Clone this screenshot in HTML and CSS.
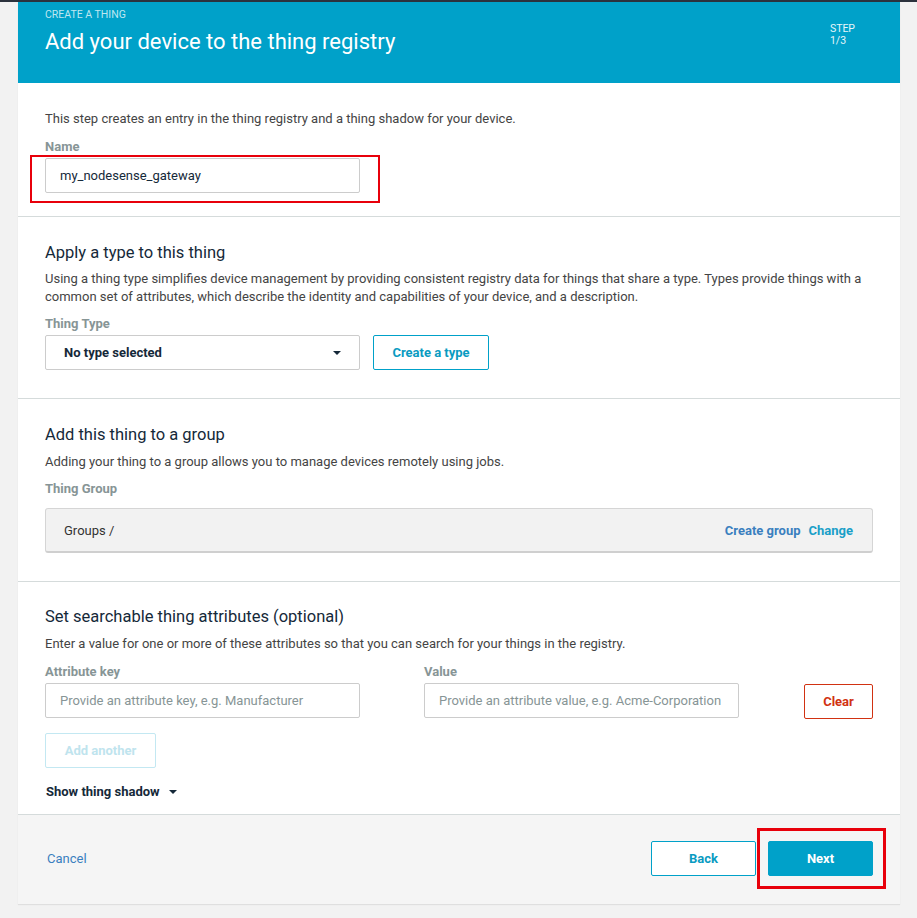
FILE: index.html
```html
<!DOCTYPE html>
<html>
<head>
<meta charset="utf-8">
<link rel="stylesheet" href="styles.css">
</head>
<body>
<div class="topline"></div>
<div class="page">
  <div class="card">
    <header class="hero">
      <div class="hero-text">
        <div class="eyebrow">CREATE A THING</div>
        <h1 class="title">Add your device to the thing registry</h1>
      </div>
      <div class="step">STEP<br>1/3</div>
    </header>

    <section class="sec sec-name">
      <p class="desc">This step creates an entry in the thing registry and a thing shadow for your device.</p>
      <label class="label">Name</label>
      <div class="highlight-wrap">
        <div class="input filled">my_nodesense_gateway</div>
      </div>
    </section>

    <section class="sec sec-type">
      <h2 class="heading">Apply a type to this thing</h2>
      <p class="desc">Using a thing type simplifies device management by providing consistent registry data for things that share a type. Types provide things with a common set of attributes, which describe the identity and capabilities of your device, and a description.</p>
      <label class="label">Thing Type</label>
      <div class="row">
        <div class="input select"><span>No type selected</span><span class="caret"></span></div>
        <button class="btn btn-outline btn-type">Create a type</button>
      </div>
    </section>

    <section class="sec sec-group">
      <h2 class="heading">Add this thing to a group</h2>
      <p class="desc">Adding your thing to a group allows you to manage devices remotely using jobs.</p>
      <label class="label">Thing Group</label>
      <div class="groupbox">
        <span class="groups">Groups&nbsp;/</span>
        <span class="group-links"><a class="link-dark">Create group</a><a class="link-cyan">Change</a></span>
      </div>
    </section>

    <section class="sec sec-attrs">
      <h2 class="heading">Set searchable thing attributes (optional)</h2>
      <p class="desc">Enter a value for one or more of these attributes so that you can search for your things in the registry.</p>
      <div class="attr-grid">
        <label class="label">Attribute key</label>
        <label class="label">Value</label>
        <span></span>
        <div class="input placeholder">Provide an attribute key, e.g. Manufacturer</div>
        <div class="input placeholder">Provide an attribute value, e.g. Acme-Corporation</div>
        <button class="btn btn-danger">Clear</button>
      </div>
      <button class="btn btn-disabled">Add another</button>
      <div class="shadow-toggle">Show thing shadow <span class="caret"></span></div>
    </section>

    <footer class="foot">
      <a class="cancel">Cancel</a>
      <div class="foot-btns">
        <button class="btn btn-outline btn-nav">Back</button>
        <div class="next-wrap">
          <button class="btn btn-primary btn-nav">Next</button>
        </div>
      </div>
    </footer>
  </div>
</div>
</body>
</html>
```

FILE: styles.css
```css
* { box-sizing: border-box; }
html, body { margin: 0; padding: 0; }
body {
  background: #f2f2f2;
  font-family: Roboto, "Noto Sans", sans-serif;
  font-size: 13px;
  color: #444;
  width: 917px;
  height: 918px;
  overflow: hidden;
}
.topline { height: 2px; background: #2b323d; }
.page { padding: 0 17px 0 18px; }
.card {
  background: #fff;
  box-shadow: 0 1px 1px rgba(0,0,0,0.08);
}
.hero {
  background: #00a1c9;
  height: 81px;
  display: flex;
  justify-content: space-between;
  padding: 6px 45px 0 27px;
}
.eyebrow { color: #bfe7f1; font-size: 10.5px; line-height: 14px; }
.title {
  margin: 7px 0 0;
  font-weight: 400;
  color: #fff;
  font-size: 22px;
  line-height: 26px;
}
.step {
  color: #e6f6fa;
  font-size: 10.5px;
  line-height: 12px;
  padding-top: 15px;
}
.sec {
  padding: 25px 27px 28px;
  border-bottom: 1px solid #d5dbdb;
}
.sec-name { padding-top: 27px; padding-bottom: 23px; }
.sec-attrs { padding-top: 24px; padding-bottom: 13px; }
.heading {
  margin: 0;
  font-size: 16.5px;
  font-weight: 400;
  line-height: 22px;
  color: #152939;
}
.desc { margin: 7px 0 0; line-height: 18px; color: #444; }
.sec-type .desc { margin-top: 6px; }
.sec-name .desc { margin-top: 0; }
.label {
  display: block;
  margin-top: 9px;
  font-weight: 700;
  color: #879596;
  line-height: 18px;
}
.sec-name .label { margin-top: 10px; }
.input {
  height: 35px;
  width: 315px;
  border: 1px solid #ccc;
  border-radius: 2px;
  display: flex;
  align-items: center;
  padding: 0 14px;
  color: #152939;
  background: #fff;
}
.highlight-wrap { position: relative; width: 315px; margin-top: 2px; }
.highlight-wrap::after {
  content: "";
  position: absolute;
  left: -15px; right: -20px; top: -3px; bottom: -10px;
  border: 2px solid #e8000b;
}
.filled { color: #152939; }
.row { display: flex; gap: 13px; margin-top: 2px; }
.select { justify-content: space-between; padding: 0 18px; font-weight: 700; }
.caret {
  display: inline-block;
  width: 0; height: 0;
  border-left: 4px solid transparent;
  border-right: 4px solid transparent;
  border-top: 4px solid #152939;
}
.btn {
  font-family: inherit;
  font-size: 13px;
  font-weight: 700;
  height: 35px;
  border-radius: 2px;
  background: #fff;
  cursor: pointer;
  padding: 0;
}
.btn-outline { border: 1px solid #00a1c9; color: #0a9bc1; }
.btn-type { width: 116px; }
.groupbox {
  margin-top: 10px;
  height: 45px;
  background: #f2f2f2;
  border: 1px solid #d5d5d5;
  border-bottom: 2px solid #cfcfcf;
  border-radius: 3px;
  display: flex;
  align-items: center;
  justify-content: space-between;
  padding: 0 19px 0 18px;
}
.groups { color: #333; }
.group-links { display: flex; gap: 8px; font-weight: 700; }
.link-dark { color: #3a7fbf; }
.link-cyan { color: #1a9fc8; }
.attr-grid {
  display: grid;
  grid-template-columns: 315px 315px 1fr;
  column-gap: 64px;
}
.attr-grid .label { margin-top: 10px; }
.attr-grid .input { margin-top: 2px; }
.placeholder { color: #879596; }
.btn-danger {
  justify-self: end;
  width: 69px;
  margin-top: 3px;
  border: 1px solid #d13212;
  color: #d13212;
}
.btn-disabled {
  display: block;
  margin-top: 14px;
  width: 111px;
  border: 1px solid #c3e8f2;
  color: #bfe4ee;
}
.shadow-toggle {
  margin-top: 15px;
  font-weight: 700;
  color: #152939;
  line-height: 18px;
  display: flex;
  align-items: center;
  gap: 9px;
  padding-left: 1px;
}
.foot {
  background: #f5f5f5;
  height: 89px;
  display: flex;
  align-items: flex-start;
  justify-content: space-between;
  padding: 26px 27px 0 29px;
}
.cancel { color: #3a7fbf; line-height: 35px; }
.foot-btns { display: flex; gap: 12px; }
.btn-nav { width: 105px; }
.btn-primary { background: #00a1c9; border: 1px solid #00a1c9; color: #fff; }
.next-wrap { position: relative; }
.next-wrap::after {
  content: "";
  position: absolute;
  left: -11px; right: -13px; top: -13px; bottom: -13px;
  border: 3px solid #e8000b;
  pointer-events: none;
}
```
